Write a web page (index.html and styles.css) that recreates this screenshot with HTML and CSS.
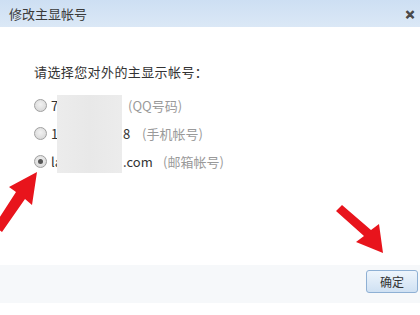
FILE: index.html
```html
<!DOCTYPE html>
<html lang="zh-CN">
<head>
<meta charset="utf-8">
<link rel="stylesheet" href="styles.css">
</head>
<body>
<div class="dialog">
  <div class="titlebar">
    <span class="title">修改主显帐号</span>
    <span class="close">✕</span>
  </div>
  <div class="content">
    <div class="prompt">请选择您对外的主显示帐号：</div>
    <div class="options">
      <div class="row"><span class="radio"></span><span class="acct">7</span><span class="kind k1">(QQ号码)</span></div>
      <div class="row"><span class="radio"></span><span class="acct">1<span class="tail t2">8</span></span><span class="kind k2">(手机帐号)</span></div>
      <div class="row"><span class="radio checked"></span><span class="acct">la<span class="tail t3">.com</span></span><span class="kind k3">(邮箱帐号)</span></div>
      <div class="blur"></div>
    </div>
  </div>
  <div class="footer">
    <button class="ok">确定</button>
  </div>
  <svg class="arrows" width="420" height="315" viewBox="0 0 420 315">
    <path d="M37 172 L9 187 L16 192 L-6 226 L2 232 L25 199 L32 205 Z" fill="#e8141c"/>
    <path d="M383 253 L379 224 L371 230 L342 205 L336 211 L364 236 L356 242 Z" fill="#e8141c"/>
  </svg>
</div>
</body>
</html>
```
FILE: styles.css
```css
* { box-sizing: border-box; }
html, body { margin: 0; padding: 0; background: #fff; }
body {
  width: 420px;
  height: 315px;
  overflow: hidden;
  font-family: "Noto Sans CJK SC", "Liberation Sans", sans-serif;
  font-size: 13px;
  color: #333;
}
.dialog {
  position: relative;
  width: 420px;
  height: 315px;
  display: flex;
  flex-direction: column;
}
.titlebar {
  height: 27px;
  flex: none;
  display: flex;
  align-items: center;
  justify-content: space-between;
  padding: 0 4px 0 9px;
  background: linear-gradient(#cddff3, #dbe8f6);
}
.title {
  font-size: 13px;
  color: #3a3a3a;
  letter-spacing: 0;
}
.close {
  font-size: 12px;
  font-weight: bold;
  color: #4a4a4a;
  width: 12px;
  text-align: center;
  -webkit-text-stroke: 0.6px #4a4a4a;
}
.content {
  flex: 1;
  padding: 35px 0 0 34px;
}
.prompt {
  line-height: 20px;
  height: 20px;
  color: #333;
  letter-spacing: 0.4px;
}
.options {
  position: relative;
  margin-top: 9px;
}
.row {
  display: flex;
  align-items: center;
  height: 28px;
  position: relative;
}
.radio {
  width: 13px;
  height: 13px;
  border-radius: 50%;
  border: 1px solid #a0a0a0;
  background: radial-gradient(circle at 50% 40%, #f2f2f2, #d2d2d2);
  flex: none;
  position: relative;
}
.radio.checked::after {
  content: "";
  position: absolute;
  left: 3px;
  top: 3px;
  width: 5px;
  height: 5px;
  border-radius: 50%;
  background: #555;
}
.acct {
  margin-left: 4px;
  color: #333;
  position: relative;
}
.tail { position: absolute; top: 0; }
.t2 { left: 72px; }
.t3 { left: 72px; }
.kind { color: #9a9a9a; position: absolute; }
.k1 { left: 94px; }
.k2 { left: 108px; }
.k3 { left: 129px; }
.blur {
  position: absolute;
  left: 23px;
  top: 4px;
  width: 65px;
  height: 78px;
  background: linear-gradient(90deg, #ececec, #e8e8e8 50%, #ececec);
}
.footer {
  flex: none;
  height: 38px;
  margin-bottom: 12px;
  background: #f6f8fa;
  display: flex;
  justify-content: flex-end;
  align-items: flex-start;
  padding: 5px 2px 0 0;
}
.ok {
  width: 52px;
  height: 23px;
  border: 1px solid #8eb0d4;
  border-radius: 3px;
  background: linear-gradient(#eef5fc, #cfe1f3);
  font-family: "Noto Sans CJK SC", sans-serif;
  font-size: 12px;
  color: #333;
  padding: 0;
}
.arrows {
  position: absolute;
  left: 0;
  top: 0;
  pointer-events: none;
}
```
